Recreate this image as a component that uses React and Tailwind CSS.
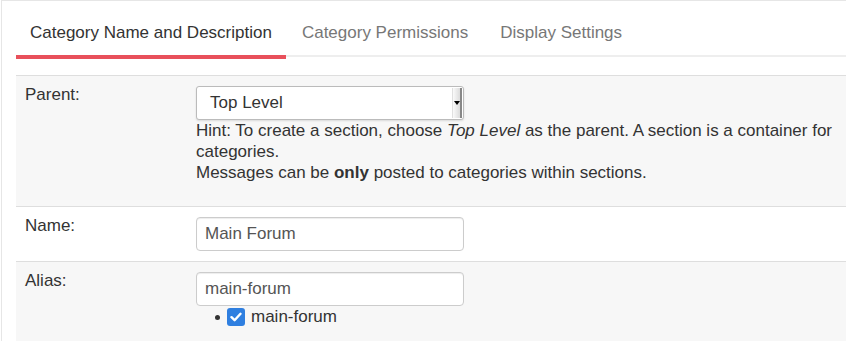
import React from "react";

function Tab({ label, active, first }) {
  return (
    <li
      className={
        "-mb-[4px] pt-[22px] pb-[13px] leading-[19px] text-[17px] border-b-4 " +
        (first ? "px-[14px] " : "px-[16px] ") +
        (active
          ? "border-[#e8505b] text-[#333]"
          : "border-transparent text-[#777]")
      }
    >
      {label}
    </li>
  );
}

function Row({ label, gray, children }) {
  return (
    <div
      className={
        "flex border-b border-[#dedede] " + (gray ? "bg-[#f7f7f7]" : "bg-white")
      }
    >
      <div className="w-[180px] shrink-0 pl-[9px] pt-[9px] text-[17px] leading-[20px] text-[#333]">
        {label}
      </div>
      <div className="flex-1 pt-[10px]">{children}</div>
    </div>
  );
}

function TextInput({ value }) {
  return (
    <div className="w-[268px] h-[34px] rounded-[4px] border border-[#ccc] bg-white shadow-[inset_0_1px_1px_rgba(0,0,0,0.075)] flex items-center pl-[8px] text-[17px] text-[#555]">
      {value}
    </div>
  );
}

export default function App() {
  return (
    <div
      className="w-[846px] h-[341px] overflow-hidden bg-white"
      style={{ fontFamily: '"Liberation Sans", Arial, sans-serif' }}
    >
      <div className="ml-px h-full border-l border-t border-[#e6e6e6] pl-[14px]">
        <ul className="flex border-b-2 border-[#eeeeee]">
          <Tab label="Category Name and Description" active first />
          <Tab label="Category Permissions" />
          <Tab label="Display Settings" />
        </ul>
        <div className="mt-[18px] border-t border-[#dedede]">
          <Row label="Parent:" gray>
            <div className="relative w-[268px] h-[34px] rounded-[3px] border border-[#bbb] bg-white shadow-[0_1px_2px_rgba(0,0,0,0.12)] flex items-center pl-[13px] text-[17px] text-[#333]">
              Top Level
              <div className="absolute right-[1px] top-[1px] bottom-[1px] w-[10px] border-l border-r-2 border-l-[#e0e0e0] border-r-[#888] bg-gradient-to-r from-[#fafafa] to-[#dcdcdc] flex items-center justify-center">
                <div className="w-0 h-0 border-l-[3px] border-r-[3px] border-t-[4px] border-l-transparent border-r-transparent border-t-black" />
              </div>
            </div>
            <div className="text-[17px] leading-[21px] text-[#333] pb-[23px] pr-[10px]">
              Hint: To create a section, choose <i>Top Level</i> as the parent. A section is a container for categories.
              <br />
              Messages can be <b>only</b> posted to categories within sections.
            </div>
          </Row>
          <Row label="Name:">
            <div className="pb-[10px]">
              <TextInput value="Main Forum" />
            </div>
          </Row>
          <Row label="Alias:" gray>
            <TextInput value="main-forum" />
            <div className="flex items-center mt-[1px] h-[20px] text-[17px] text-[#333]">
              <span className="ml-[19px] w-[5px] h-[5px] rounded-full bg-[#333]" />
              <span className="ml-[7px] w-[18px] h-[18px] rounded-[3px] bg-[#2f7fe0] flex items-center justify-center">
                <svg width="12" height="10" viewBox="0 0 12 10">
                  <path d="M1.5 5.2 L4.6 8.2 L10.5 1.8" fill="none" stroke="white" strokeWidth="2.4" strokeLinecap="round" strokeLinejoin="round" />
                </svg>
              </span>
              <span className="ml-[6px]">main-forum</span>
            </div>
            <div className="h-[40px]" />
          </Row>
        </div>
      </div>
    </div>
  );
}
